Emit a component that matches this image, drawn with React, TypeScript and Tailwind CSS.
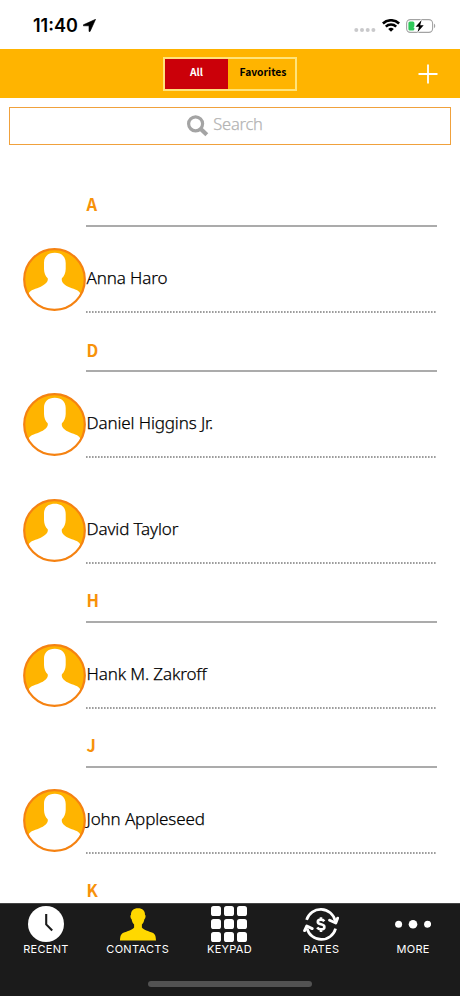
import React from 'react';

interface Group {
  letter: string;
  names: string[];
}

const GROUPS: Group[] = [
  { letter: 'A', names: ['Anna Haro'] },
  { letter: 'D', names: ['Daniel Higgins Jr.', 'David Taylor'] },
  { letter: 'H', names: ['Hank M. Zakroff'] },
  { letter: 'J', names: ['John Appleseed'] },
  { letter: 'K', names: [] },
];

const Avatar = () => (
  <svg className="h-[63px] w-[63px] shrink-0" viewBox="0 0 63 63">
    <circle cx="31.5" cy="31.5" r="30.4" fill="#ffb400" />
    <path
      d="M31.8 4.8C25 4.8 20.9 8.6 21 15V21C21.1 25 22.3 28 24.7 30.2C25.6 34 21.5 37.3 16 39.4C11 41.2 6.8 42.3 5.4 46A30 30 0 0 0 57.6 46C56.2 42.3 52 41.2 47 39.4C41.5 37.3 38 34 38.9 30.2C41.3 28 42.6 25 42.7 21V15C42.7 8.6 38.6 4.8 31.8 4.8Z"
      fill="#fff"
    />
    <circle cx="31.5" cy="31.5" r="30.3" fill="none" stroke="#f58212" strokeWidth="2.2" />
  </svg>
);

const ClockIcon = () => (
  <svg className="h-9 w-9" viewBox="0 0 36 36">
    <circle cx="18" cy="18" r="18" fill="#fff" />
    <path d="M18.2 8V18.4L24.2 24.6" fill="none" stroke="#1b1b1b" strokeWidth="2.1" />
  </svg>
);

const PersonIcon = () => (
  <svg className="h-9 w-9" viewBox="0 0 36 36">
    <path
      d="M18 2.2C13.5 2.2 10.9 4.7 11 8.8C10 9.2 10.3 12.3 11.6 13.2C12.1 15.7 12.9 17.3 14.1 18.5V21.4C12.9 23.8 7 25 3.4 26.8C.7 28.2 .2 30.2 0 34.6H36C35.8 30.2 35.3 28.2 32.6 26.8C29 25 23.1 23.8 21.9 21.4V18.5C23.1 17.3 23.9 15.7 24.4 13.2C25.7 12.3 26 9.2 25 8.8C25.1 4.7 22.5 2.2 18 2.2Z"
      fill="#ffd800"
    />
  </svg>
);

const KeypadIcon = () => (
  <svg className="h-9 w-9" viewBox="0 0 36 36" fill="#fff">
    {[0, 13, 26].map((y) =>
      [0, 13, 26].map((x) => <rect key={`${x}-${y}`} x={x} y={y} width="10" height="10" rx="2.6" />)
    )}
  </svg>
);

const RatesIcon = () => (
  <svg className="h-9 w-9" viewBox="0 0 36 36" fill="none" stroke="#fff">
    <path d="M3.6 13.8A14.8 14.8 0 0 1 32.2 15" strokeWidth="2.7" />
    <path d="M32.6 22.6A14.8 14.8 0 0 1 4 22.3" strokeWidth="2.7" />
    <path d="M26.6 14.2L32.8 17L34.6 12.2" strokeWidth="2.9" strokeLinecap="round" strokeLinejoin="round" />
    <path d="M1.6 24.6L3.8 20L9.2 22.6" strokeWidth="2.9" strokeLinecap="round" strokeLinejoin="round" />
    <path
      d="M21.3 15.3C20.4 14.1 19.4 13.6 18 13.6C16.1 13.6 14.8 14.5 14.8 15.9C14.8 19.2 21.4 17.4 21.4 20.9C21.4 22.5 20 23.4 18 23.4C16.3 23.4 15 22.7 14.2 21.5M18 11.2V13.6M18 23.4V25.9"
      strokeWidth="2.6"
    />
  </svg>
);

const MoreIcon = () => (
  <svg className="h-9 w-9" viewBox="0 0 36 36" fill="#fff">
    <circle cx="3.6" cy="18.2" r="3.5" />
    <circle cx="18" cy="18.2" r="4.3" />
    <circle cx="32.6" cy="18.2" r="3.5" />
  </svg>
);

const TABS = [
  { label: 'RECENT', icon: <ClockIcon /> },
  { label: 'CONTACTS', icon: <PersonIcon /> },
  { label: 'KEYPAD', icon: <KeypadIcon /> },
  { label: 'RATES', icon: <RatesIcon /> },
  { label: 'MORE', icon: <MoreIcon /> },
];

const StatusBar = () => (
  <div className="flex h-[49px] shrink-0 items-center justify-between pl-[33px] pr-6 pt-[2px]">
    <div className="flex items-center gap-[5px]">
      <span className="font-['Inter',sans-serif] text-[18px] font-semibold leading-none tracking-[0px]">11:40</span>
      <svg className="h-[13px] w-[13px]" viewBox="0 0 13 13">
        <path d="M12.6 .3L.4 5.8C-.1 6.1 0 6.8 .6 6.8H6V12.2C6.1 12.8 6.8 12.9 7.1 12.4Z" stroke="#000" strokeWidth=".6" />
      </svg>
    </div>
    <div className="flex items-center">
      <svg className="mr-[6px] mt-[9px] h-1 w-[22px]" viewBox="0 0 22 4" fill="#c9c9cb">
        <circle cx="2.3" cy="2" r="2" />
        <circle cx="8" cy="2" r="2" />
        <circle cx="13.7" cy="2" r="2" />
        <circle cx="19.4" cy="2" r="2" />
      </svg>
      <svg className="mr-[6px] h-[13px] w-[18px]" viewBox="0 0 18 13" fill="none" stroke="#000" strokeWidth="2.5">
        <path d="M.9 4.5A11.6 11.6 0 0 1 17.1 4.5" />
        <path d="M3.8 7.6A7.4 7.4 0 0 1 14.2 7.6" />
        <path d="M9 12.8L6.2 10A4 4 0 0 1 11.8 10Z" fill="#000" stroke="none" />
      </svg>
      <svg className="h-[14px] w-[30px]" viewBox="0 0 30 14">
        <rect x=".6" y=".6" width="26" height="12.8" rx="3.8" fill="none" stroke="#a3a3a3" strokeWidth="1.1" />
        <path d="M28 4.8C29.6 5.4 29.6 8.6 28 9.2Z" fill="#a3a3a3" />
        <rect x="2.4" y="2.4" width="6" height="9.2" rx="1.6" fill="#30c85a" />
        <path d="M15.6 1L9.6 7.7H13L11.5 13.2L17.7 6.3H14.2Z" fill="#000" stroke="#fff" strokeWidth="2" paintOrder="stroke" />
      </svg>
    </div>
  </div>
);

export default function App() {
  return (
    <div className="flex h-[996px] w-[460px] flex-col overflow-hidden bg-white font-['Noto_Sans',sans-serif] text-black">
      <StatusBar />

      {/* Top bar */}
      <div className="grid h-[49px] shrink-0 grid-cols-[1fr_134px_1fr] items-center bg-[#ffb400]">
        <div />
        <div className="grid h-[34px] grid-cols-[63px_1fr] border-2 border-[#ffe37a] font-['Noto_Sans_CJK_KR',sans-serif] text-[10.3px] font-bold">
          <button className="bg-[#cb0009] pb-[4px] text-white">All</button>
          <button className="pb-[4px] pl-[3px]">Favorites</button>
        </div>
        <button className="mr-[22px] justify-self-end" aria-label="Add contact">
          <svg className="h-5 w-5" viewBox="0 0 20 20" stroke="#fff" strokeWidth="1.8">
            <path d="M10 .5V19.5M.5 10H19.5" />
          </svg>
        </button>
      </div>

      {/* Search */}
      <div className="mx-[9px] mt-[9px] flex h-[38px] shrink-0 items-center justify-center border border-[#f0a13c] pr-[10px]">
        <svg className="mr-1 h-[22px] w-[22px]" viewBox="0 0 22 22" fill="none" stroke="#a4a4a4">
          <circle cx="8.6" cy="8.8" r="7" strokeWidth="3.2" />
          <path d="M13.8 14L19.8 19.8" strokeWidth="4.2" />
        </svg>
        <span className="pb-[3px] text-[16.5px] font-light leading-none tracking-[-0.25px] text-[#b4b4b4] [-webkit-text-stroke:0.25px]">
          Search
        </span>
      </div>

      {/* Contacts */}
      <div className="min-h-0 flex-1 overflow-hidden pt-[23.2px]">
        {GROUPS.map(({ letter, names }) => (
          <section key={letter}>
            <h2 className="ml-[86px] mr-[23px] h-[59px] border-b-2 border-[#ababab] pl-[0.5px] pt-[26.2px] font-['Noto_Sans_CJK_KR',sans-serif] text-[16.5px] font-bold leading-5 text-[#f7920a]">
              {letter}
            </h2>
            {names.map((name, i) => (
              <div key={name} className={i === 0 ? 'h-[86.2px] pt-[21px]' : 'h-[105px] pt-[40px]'}>
                <div className="flex items-center pl-[23px]">
                  <Avatar />
                  <span className="pb-[3px] pl-[0.5px] text-[17px] font-light leading-5 tracking-[-0.12px] [-webkit-text-stroke:0.25px]">
                    {name}
                  </span>
                </div>
                <div className="ml-[86px] mr-[23px] h-[2px] bg-[repeating-linear-gradient(90deg,#9d9d9d_0_1px,#c4c4c4_1px_2px,#fff_2px_3px)]" />
              </div>
            ))}
          </section>
        ))}
      </div>

      {/* Tab bar */}
      <nav className="flex h-[93px] shrink-0 flex-col items-center justify-between border-t border-[#444] bg-[#1b1b1b] pb-[9px] pt-[2px] font-['Inter',sans-serif] text-white">
        <div className="grid w-[459px] grid-cols-5 self-start">
          {TABS.map((tab) => (
            <button key={tab.label} className="flex flex-col items-center">
              {tab.icon}
              <span className="mt-px text-[11px] leading-[13px] tracking-[0.3px]">{tab.label}</span>
            </button>
          ))}
        </div>
        <div className="h-[6px] w-[164px] rounded-full bg-[#525252]" />
      </nav>
    </div>
  );
}
